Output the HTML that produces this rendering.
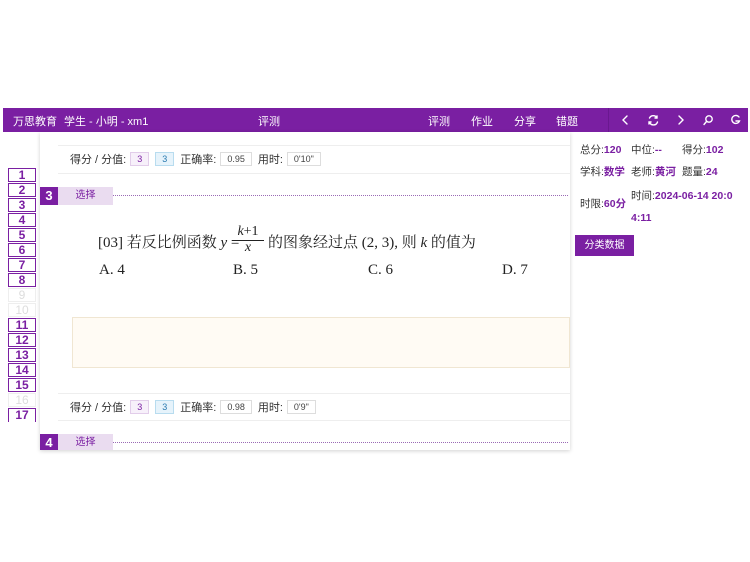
<!DOCTYPE html><html><head><meta charset="utf-8"><style>
body{margin:0;width:750px;height:562px;background:#fff;position:relative;overflow:hidden;font-family:"Liberation Sans","Noto Sans CJK SC",sans-serif;}
.bar{position:absolute;left:3px;top:108px;width:745px;height:24px;background:#7a1fa2;color:#fff;font-size:11px;}
.bar span{position:absolute;top:5px}
.sb{position:absolute;left:8px;width:26px;height:12px;border:1px solid #7a1fa2;color:#7a1fa2;font-weight:bold;font-size:12px;text-align:center;line-height:12px;}
.sb.d{border-color:#eee;color:#ddd;font-weight:normal}
.main{position:absolute;left:40px;top:132px;width:530px;height:318px;box-shadow:0 1px 4px rgba(0,0,0,.18);background:#fff;overflow:hidden}
.hl{position:absolute;left:18px;right:0;height:1px;background:#eee}
.row{position:absolute;left:30px;font-size:11px;color:#333;display:flex;align-items:center}
.row b{font-weight:normal;display:inline-block;border:1px solid #ddd;padding:1px 6px;margin:0 6px 0 4px;font-size:9px;color:#444}
.badge{position:absolute;left:0;width:18px;height:18px;background:#7a1fa2;color:#fff;font-weight:bold;font-size:13px;text-align:center;line-height:18px}
.tag{position:absolute;left:18px;width:55px;height:18px;background:#eadcf0;color:#7a1fa2;font-size:10px;line-height:18px;text-align:center}
.dot{position:absolute;left:73px;right:2px;border-top:1px dotted #9a6ab5}
.q{position:absolute;font-family:"Liberation Serif","Noto Serif CJK SC",serif;font-size:15px;color:#222}
.r{position:absolute;font-size:10.5px;color:#333}
.r i{font-style:normal;color:#7a1fa2;font-weight:bold}
</style></head><body>
<div class="bar">
<span style="left:10px">万思教育</span><span style="left:61px">学生 - 小明 - xm1</span><span style="left:255px">评测</span>
<span style="left:425px">评测</span><span style="left:468px">作业</span><span style="left:511px">分享</span><span style="left:553px">错题</span>
<div style="position:absolute;left:605px;top:0;width:1px;height:24px;background:#6a1890"></div>
<svg style="position:absolute;left:610px;top:0" width="135" height="24" fill="none" stroke="#fff" stroke-width="1.4" stroke-linecap="round">
<path d="M14 8l-4 4 4 4"/>
<path d="M36.5 10a4.2 4.2 0 0 1 7.5 0M44.5 14a4.2 4.2 0 0 1-8 0M44 8v2h-2M36 16v-2h2"/>
<path d="M66 8l4 4-4 4"/>
<circle cx="96" cy="11" r="3.2"/><path d="M93.5 13.5l-2.5 3"/>
<path d="M126 9a4 4 0 1 0 0.5 4h-3.5"/>
</svg>
</div>
<div class="sb" style="top:168px">1</div><div class="sb" style="top:183px">2</div><div class="sb" style="top:198px">3</div><div class="sb" style="top:213px">4</div><div class="sb" style="top:228px">5</div><div class="sb" style="top:243px">6</div><div class="sb" style="top:258px">7</div><div class="sb" style="top:273px">8</div><div class="sb d" style="top:288px">9</div><div class="sb d" style="top:303px">10</div><div class="sb" style="top:318px">11</div><div class="sb" style="top:333px">12</div><div class="sb" style="top:348px">13</div><div class="sb" style="top:363px">14</div><div class="sb" style="top:378px">15</div><div class="sb d" style="top:393px">16</div><div class="sb" style="top:408px;height:13px;border-bottom:none">17</div>
<div style="position:absolute;left:0;top:423px;width:40px;height:10px;background:#fff"></div>
<div class="main">
<div class="hl" style="top:13px"></div>
<div class="row" style="top:19px">得分 / 分值: <b style="background:#f7f0fa;border-color:#e2cdea;color:#7a1fa2">3</b><b style="background:#e6f3fb;border-color:#b8dcef;color:#2a7ab0;margin-left:0">3</b>正确率: <b>0.95</b>用时: <b>0'10"</b></div>
<div class="hl" style="top:41px"></div>
<div class="badge" style="top:55px">3</div><div class="tag" style="top:55px">选择</div><div class="dot" style="top:63px"></div>
<div class="q" style="left:58px;top:99px">[03] 若反比例函数 <i>y</i> = </div>
<div class="q" style="left:192px;top:92px;font-size:14px;text-align:center;width:32px"><i>k</i>+1<div style="border-top:1px solid #222;font-style:italic;line-height:14px">x</div></div>
<div class="q" style="left:228px;top:99px">的图象经过点 (2, 3), 则 <i>k</i> 的值为</div>
<div class="q" style="left:59px;top:130px">A. 4</div><div class="q" style="left:193px;top:130px">B. 5</div><div class="q" style="left:328px;top:130px">C. 6</div><div class="q" style="left:462px;top:130px">D. 7</div>
<div style="position:absolute;left:32px;top:185px;width:496px;height:49px;background:#fffbf4;border:1px solid #f0e6d2"></div>
<div class="hl" style="top:261px"></div>
<div class="row" style="top:267px">得分 / 分值: <b style="background:#f7f0fa;border-color:#e2cdea;color:#7a1fa2">3</b><b style="background:#e6f3fb;border-color:#b8dcef;color:#2a7ab0;margin-left:0">3</b>正确率: <b>0.98</b>用时: <b>0'9"</b></div>
<div class="hl" style="top:288px"></div>
<div class="badge" style="top:302px">4</div><div class="tag" style="top:302px">选择</div><div class="dot" style="top:310px"></div>
</div>
<div class="r" style="left:580px;top:142px">总分:<i>120</i></div><div class="r" style="left:631px;top:142px">中位:<i>--</i></div><div class="r" style="left:682px;top:142px">得分:<i>102</i></div>
<div class="r" style="left:580px;top:164px">学科:<i>数学</i></div><div class="r" style="left:631px;top:164px">老师:<i>黄河</i></div><div class="r" style="left:682px;top:164px">题量:<i>24</i></div>
<div class="r" style="left:580px;top:196px">时限:<i>60分</i></div><div class="r" style="left:631px;top:185px;width:105px;line-height:22px">时间:<i>2024-06-14 20:0<br>4:11</i></div>
<div style="position:absolute;left:575px;top:235px;width:59px;height:21px;background:#7a1fa2;color:#fff;font-size:10px;text-align:center;line-height:21px">分类数据</div>
</body></html>
